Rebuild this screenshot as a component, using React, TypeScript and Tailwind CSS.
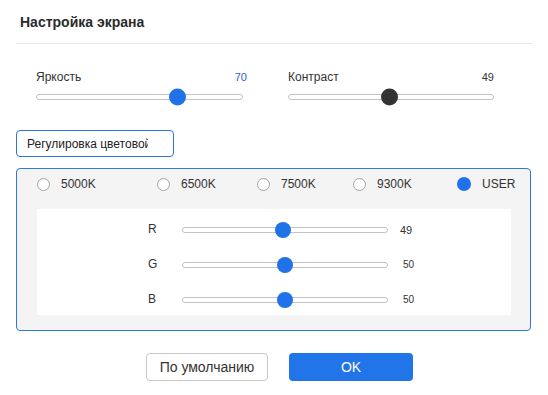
import React from "react";

function Slider({
  value,
  width,
  thumb,
  dark,
}: {
  value: number;
  width: number;
  thumb: number;
  dark?: boolean;
}) {
  const r = thumb / 2;
  const center = r + (value / 100) * (width - thumb);
  return (
    <div className="relative h-[6px]" style={{ width }}>
      <div className="h-[6px] w-full rounded-full border border-[#c4c4c4] bg-white" />
      <div
        className={
          "absolute top-1/2 -translate-y-1/2 rounded-full " +
          (dark ? "bg-[#333333]" : "bg-[#1f72e8]")
        }
        style={{ left: center - r, width: thumb, height: thumb }}
      />
    </div>
  );
}

function Radio({ label, checked, w }: { label: string; checked?: boolean; w?: number }) {
  return (
    <div className="flex items-center" style={w ? { width: w } : undefined}>
      {checked ? (
        <div className="h-[14px] w-[14px] rounded-full bg-[#1f72e8]" />
      ) : (
        <div className="h-[13px] w-[13px] rounded-full border border-[#a3a3a3] bg-white" />
      )}
      <span className="ml-[11px] text-[12px] leading-[14px] text-[#333333]">{label}</span>
    </div>
  );
}

function RgbRow({ label, value, small }: { label: string; value: number; small?: boolean }) {
  return (
    <div className="flex h-[16px] items-center">
      <span className="mb-[3px] ml-[111px] w-[34px] text-[12px] leading-[14px] text-[#333333]">{label}</span>
      <Slider value={value} width={206} thumb={16} />
      <span
        className={
          small
            ? "ml-[15px] text-[10px] leading-[12px] text-[#333333]"
            : "ml-[12px] text-[11px] leading-[12px] text-[#333333]"
        }
      >
        {value}
      </span>
    </div>
  );
}

export default function App() {
  return (
    <div
      className="h-[395px] w-[548px] overflow-hidden bg-white text-[#333333]"
      style={{ fontFamily: '"Liberation Sans", Arial, sans-serif' }}
    >
      <div className="h-[43px] pl-[20px] pt-[14px]">
        <div className="text-[14px] font-bold leading-[16px] text-[#2b2b2b]">Настройка экрана</div>
      </div>
      <div className="mx-[16px] h-px bg-[#e6e6e6]" />

      <div className="flex pl-[36px] pt-[26px]">
        <div className="w-[211px]">
          <div className="flex h-[14px] items-center justify-between">
            <span className="text-[12px] leading-[14px]">Яркость</span>
            <span className="text-[11px] leading-[14px] text-[#2463cc]">70</span>
          </div>
          <div className="mt-[10px]">
            <Slider value={70} width={207} thumb={17} />
          </div>
        </div>
        <div className="ml-[41px] w-[206px]">
          <div className="flex h-[14px] items-center justify-between">
            <span className="text-[12px] leading-[14px]">Контраст</span>
            <span className="text-[11px] leading-[14px]">49</span>
          </div>
          <div className="mt-[10px]">
            <Slider value={49} width={206} thumb={17} dark />
          </div>
        </div>
      </div>

      <div className="ml-[16px] mt-[30px] flex h-[27px] w-[158px] items-center rounded-[4px] border border-[#2b78e4] bg-white pl-[10px]">
        <span className="w-[121px] overflow-hidden whitespace-nowrap text-[12px] leading-[14px] text-[#222222]">
          Регулировка цветовой температуры
        </span>
      </div>

      <div className="ml-[16px] mt-[11px] w-[515px] rounded-[4px] border border-[#2b78e4] bg-[#f4f4f4]">
        <div className="flex h-[30px] items-center pl-[20px]">
          <Radio label="5000K" w={120} />
          <Radio label="6500K" w={100} />
          <Radio label="7500K" w={96} />
          <Radio label="9300K" w={104} />
          <Radio label="USER" checked />
        </div>
        <div className="ml-[20px] mt-[10px] flex h-[106px] w-[474px] flex-col gap-[19px] bg-white pt-[13px]">
          <RgbRow label="R" value={49} />
          <RgbRow label="G" value={50} small />
          <RgbRow label="B" value={50} small />
        </div>
        <div className="h-[15px]" />
      </div>

      <div className="ml-[146px] mt-[22px] flex gap-[21px]">
        <button className="flex h-[28px] w-[122px] items-center justify-center rounded-[4px] border border-[#c8c8c8] bg-white text-[14px] leading-[16px] text-[#333333]">
          По умолчанию
        </button>
        <button className="flex h-[28px] w-[124px] items-center justify-center rounded-[4px] bg-[#2175e9] text-[14px] leading-[16px] text-white">
          OK
        </button>
      </div>
    </div>
  );
}
